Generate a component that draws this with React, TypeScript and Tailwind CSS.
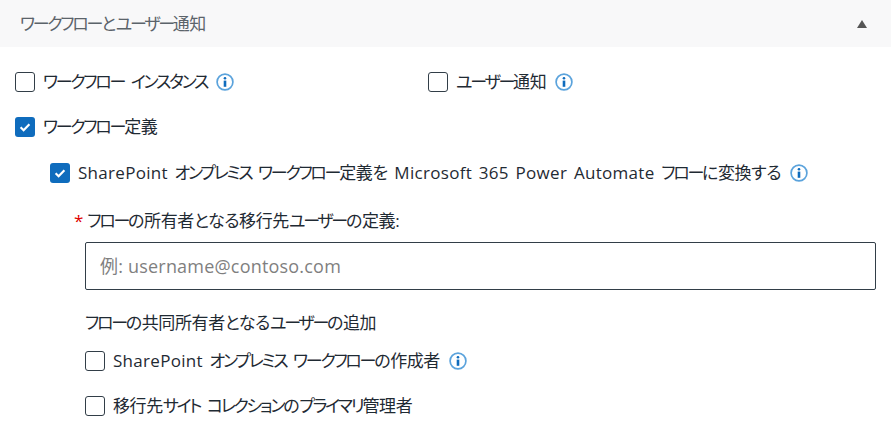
import { ReactNode } from "react";

const font = "font-['Open_Sans','Noto_Sans_CJK_JP',sans-serif] [font-feature-settings:'palt']";

// katakana runs are set tight, like the original font mix
function Jp({ text }: { text: string }) {
  const parts = text.match(/[ァ-ヶー]+|[\x20-\x7e]+|[^ァ-ヶー\x20-\x7e]+/g) ?? [];
  return (
    <>
      {parts.map((p, i) => {
        if (/^[ァ-ヶー]/.test(p)) {
          return (
            <span key={i} className="text-[17px] tracking-[-2.25px]">
              {p}
            </span>
          );
        }
        if (/^[\x20-\x7e]/.test(p)) {
          return (
            <span key={i} className="whitespace-pre text-[17px] tracking-[0.3px] [word-spacing:2px]">
              {p}
            </span>
          );
        }
        return (
          <span key={i} className="text-[17px] tracking-[-0.4px]">
            {p}
          </span>
        );
      })}
    </>
  );
}

function InfoIcon() {
  return (
    <svg width="18" height="18" viewBox="0 0 18 18" className="shrink-0">
      <circle cx="9" cy="9" r="7.9" fill="none" stroke="#5ba3dc" strokeWidth="1.7" />
      <circle cx="9" cy="5.3" r="1.3" fill="#0f6cbd" />
      <rect x="7.7" y="7.6" width="2.6" height="6.2" fill="#0f6cbd" />
    </svg>
  );
}

function Check({ checked }: { checked?: boolean }) {
  if (checked) {
    return (
      <span className="flex h-5 w-5 shrink-0 items-center justify-center rounded-[3px] bg-[#0f6cbd]">
        <svg width="12" height="12" viewBox="0 0 12 12">
          <path d="M1.6 6.3 L4.6 9.2 L10.4 3.2" fill="none" stroke="#fff" strokeWidth="2.2" />
        </svg>
      </span>
    );
  }
  return <span className="h-5 w-5 shrink-0 rounded-[3px] border border-[#323e48] bg-white" />;
}

function Row({
  checked,
  info,
  children,
  className,
}: {
  checked?: boolean;
  info?: boolean;
  children: ReactNode;
  className?: string;
}) {
  return (
    <div className={`flex items-center ${className ?? ""}`}>
      <Check checked={checked} />
      <span className="ml-2 whitespace-nowrap leading-6 text-[#1f2a33]">{children}</span>
      {info && (
        <span className="ml-[9px]">
          <InfoIcon />
        </span>
      )}
    </div>
  );
}

export default function App() {
  return (
    <div className={`h-[435px] w-[891px] overflow-hidden bg-white ${font}`}>
      <div className="flex h-[47px] items-center justify-between bg-[#f8f8f9] pl-5 pr-6">
        <span className="text-[#5b636a]">
          <Jp text="ワークフローとユーザー通知" />
        </span>
        <svg width="10" height="8" viewBox="0 0 10 8">
          <path d="M5 0 L10 8 L0 8 Z" fill="#555" />
        </svg>
      </div>

      <div className="px-[15px] pt-[23px]">
        <div className="flex">
          <Row info className="w-[413px]">
            <Jp text="ワークフロー インスタンス" />
          </Row>
          <Row info>
            <Jp text="ユーザー通知" />
          </Row>
        </div>
        <Row checked className="mt-[21px]">
          <Jp text="ワークフロー定義" />
        </Row>

        <div className="ml-[35px] mt-[22px]">
          <Row checked info>
            <Jp text="SharePoint オンプレミス ワークフロー定義を Microsoft 365 Power Automate フローに変換する" />
          </Row>

          <div className="ml-[35px]">
            <div className="mt-[24px] flex items-center leading-6 text-[#1f2a33]">
              <span className="-ml-[11px] mr-[4px] text-[17px] text-[#e00000]">*</span>
              <span>
                <Jp text="フローの所有者となる移行先ユーザーの定義:" />
              </span>
            </div>
            <div className="mt-[9px] flex h-[48px] w-[791px] items-center rounded-[2px] border border-[#323e48] px-[14px] text-[18px] tracking-[0.2px] text-[#7f7f7f]">
              例: username@contoso.com
            </div>
            <div className="mt-[21px] leading-6 text-[#1f2a33]">
              <Jp text="フローの共同所有者となるユーザーの追加" />
            </div>
            <Row info className="mt-[14px]">
              <Jp text="SharePoint オンプレミス ワークフローの作成者" />
            </Row>
            <Row className="mt-[21px]">
              <Jp text="移行先サイト コレクションのプライマリ管理者" />
            </Row>
          </div>
        </div>
      </div>
    </div>
  );
}
